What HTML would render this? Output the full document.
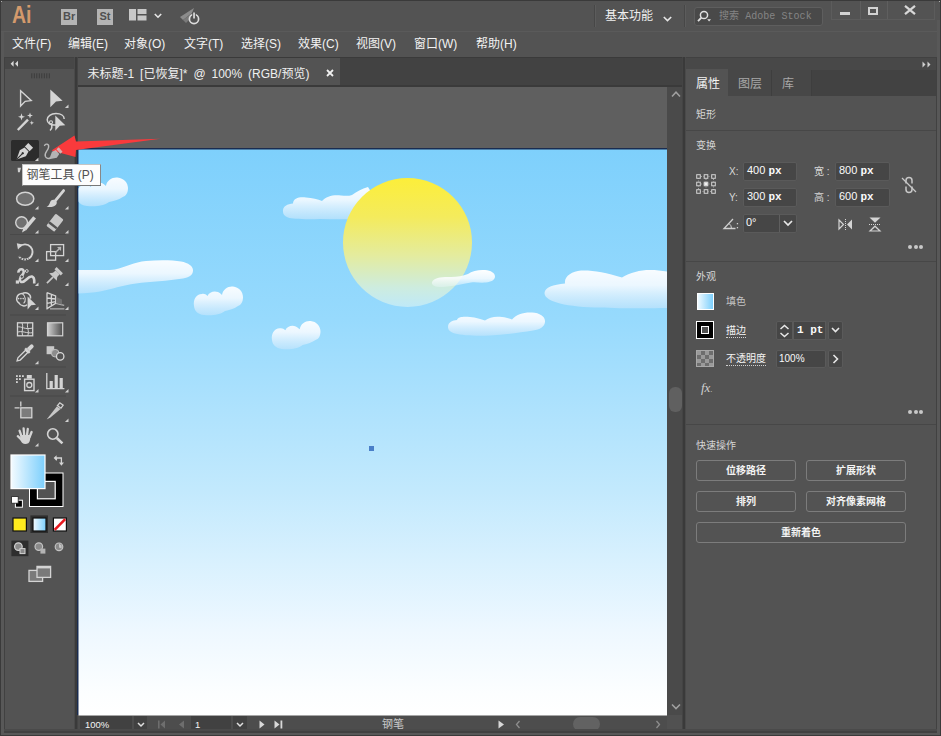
<!DOCTYPE html>
<html lang="zh-CN">
<head>
<meta charset="utf-8">
<title>Adobe Illustrator</title>
<style>
*{box-sizing:border-box;margin:0;padding:0}
html,body{width:941px;height:736px;overflow:hidden;background:#535353}
body{position:relative;font-family:"Liberation Sans","Noto Sans CJK SC",sans-serif;color:#f0f0f0;font-size:12px}
.abs{position:absolute}
.t{position:absolute;white-space:nowrap;line-height:1}
svg{position:absolute;overflow:visible}
/* frame */
#frame{left:0;top:0;width:941px;height:736px;border:1px solid #3a3a3a;pointer-events:none}
/* top bar */
#topbar{left:0;top:0;width:941px;height:32px;background:#535353}
#menubar{left:0;top:32px;width:941px;height:25px;background:#535353}
.menu{font-size:12px;color:#f2f2f2;top:38px}
/* tool panel */
#toolhead{left:4px;top:57px;width:70px;height:13px;background:#474747;border-top:1px solid #414141}
#tools{left:4px;top:69px;width:70px;height:660px;background:#535353}
#divL{left:74px;top:57px;width:4px;height:672px;background:#3a3a3a;border-left:1px solid #4a4a4a;border-right:1px solid #444}
/* doc area */
#tabbar{left:78px;top:57px;width:604px;height:30px;background:#424242;border-top:1px solid #3a3a3a;border-bottom:2px solid #3a3a3a}
#tab{left:78px;top:58px;width:262px;height:27px;background:#535353}
#paste{left:78px;top:87px;width:589px;height:628px;background:#5f5f5f}
#vscroll{left:667px;top:87px;width:15px;height:628px;background:#4a4a4a}
#divR{left:682px;top:57px;width:4px;height:672px;background:#3a3a3a;border-left:1px solid #444;border-right:1px solid #4a4a4a}
#status{left:78px;top:715px;width:604px;height:17px;background:#4d4d4d}
/* right panel */
#rhead{left:686px;top:57px;width:250px;height:13px;background:#484848;border-top:1px solid #414141}
#rtabs{left:686px;top:70px;width:250px;height:26px;background:#424242}
#rpanel{left:686px;top:96px;width:250px;height:636px;background:#535353}

.lb{font-size:10px;color:#d6d6d6}
.lbw{font-size:10px;color:#f4f4f4}
.in{position:absolute;background:#464646;border:1px solid #5a5a5a;border-radius:2px}
.iv{font-size:11px;color:#fafafa;font-family:"Liberation Sans","Noto Sans CJK SC",sans-serif}
.iv i{font-style:normal;font-family:"Liberation Mono","Noto Sans Mono CJK SC",monospace;font-size:11px;font-weight:bold}
.btn{position:absolute;height:21px;border:1px solid #7c7c7c;border-radius:3px;font-size:10px;font-weight:bold;color:#f4f4f4;text-align:center;line-height:19px;white-space:nowrap}
.sep{position:absolute;left:686px;width:250px;height:1px;background:#474747}
.dots{position:absolute;width:15px;height:5px}
.dots b{position:absolute;top:0;width:4px;height:4px;border-radius:50%;background:#c8c8c8}
</style>
</head>
<body>
<div id="topbar" class="abs"></div>
<div id="menubar" class="abs"></div>
<div id="toolhead" class="abs"></div>
<div id="tools" class="abs"></div>
<div id="divL" class="abs"></div>
<div id="tabbar" class="abs"></div>
<div id="tab" class="abs"></div>
<div id="paste" class="abs"></div>
<div id="vscroll" class="abs"></div>
<div id="divR" class="abs"></div>
<div id="status" class="abs"></div>
<div id="rhead" class="abs"></div>
<div id="rtabs" class="abs"></div>
<div id="rpanel" class="abs"></div>


<!-- TOP BAR -->
<span class="t" style="left:11.500px;top:4px;font-size:23px;font-weight:bold;color:#d39a6c;transform:scaleX(0.850);transform-origin:0 0">Ai</span>
<div class="abs" style="left:61px;top:9px;width:16px;height:16px;background:#b4b4b4"></div>
<span class="t" style="left:63px;top:11px;font-size:11px;font-weight:bold;color:#505050">Br</span>
<div class="abs" style="left:97px;top:9px;width:16px;height:16px;background:#b4b4b4"></div>
<span class="t" style="left:99.5px;top:11px;font-size:11px;font-weight:bold;color:#505050">St</span>
<svg style="left:129px;top:9px" width="18" height="12" viewBox="0 0 18 12"><rect x="0" y="0" width="7" height="11.5" fill="#c8c8c8"/><rect x="8.5" y="0" width="9" height="5" fill="#c8c8c8"/><rect x="8.5" y="6.5" width="9" height="5" fill="#c8c8c8"/></svg>
<svg style="left:154px;top:13px" width="8" height="6" viewBox="0 0 8 6"><path d="M0.8 1 L4 4.2 L7.2 1" fill="none" stroke="#e6e6e6" stroke-width="1.6"/></svg>
<svg style="left:179px;top:7px" width="22" height="19" viewBox="0 0 22 19"><path d="M1 10 L15 1 L13 6 L4 13 Z" fill="#8c8c8c"/><path d="M4 13 L13 6 L11 12 L7 16Z" fill="#7a7a7a"/><circle cx="15" cy="12" r="4.6" fill="none" stroke="#dcdcdc" stroke-width="1.7"/><rect x="13.2" y="5" width="3.6" height="6" fill="#535353"/><rect x="14.2" y="5.5" width="1.7" height="6" fill="#dcdcdc"/></svg>
<div class="abs" style="left:594px;top:5px;width:1px;height:22px;background:#474747"></div>
<div class="abs" style="left:595px;top:5px;width:1px;height:22px;background:#5c5c5c"></div>
<span class="t" style="left:605px;top:10px;font-size:12px;color:#f0f0f0">基本功能</span>
<svg style="left:663px;top:16px" width="9" height="6" viewBox="0 0 9 6"><path d="M0.8 1 L4.5 4.6 L8.2 1" fill="none" stroke="#e6e6e6" stroke-width="1.6"/></svg>
<div class="abs" style="left:684px;top:5px;width:1px;height:22px;background:#474747"></div>
<div class="abs" style="left:685px;top:5px;width:1px;height:22px;background:#5c5c5c"></div>
<div class="abs" style="left:694px;top:7px;width:129px;height:19px;background:#494949;border:1px solid #5e5e5e;border-radius:3px"></div>
<svg style="left:697px;top:10px" width="15" height="13" viewBox="0 0 15 13"><circle cx="7" cy="5" r="3.6" fill="none" stroke="#e0e0e0" stroke-width="1.5"/><path d="M4.4 7.6 L1 11.2" stroke="#e0e0e0" stroke-width="1.8" fill="none"/><path d="M10.2 9.2 L14 9.2 L12.1 11.4Z" fill="#e0e0e0"/></svg>
<span class="t" style="left:719px;top:11.500px;font-size:10px;color:#858585;font-family:'Liberation Mono','Noto Sans Mono CJK SC','Noto Sans CJK SC',monospace;letter-spacing:0.05px">搜索 Adobe Stock</span>
<div class="abs" style="left:831px;top:-1px;width:104px;height:21px;border:1px solid #5c5c5c"></div>
<div class="abs" style="left:860px;top:0;width:1px;height:19px;background:#5f5f5f"></div>
<div class="abs" style="left:887px;top:0;width:1px;height:19px;background:#5f5f5f"></div>
<div class="abs" style="left:840px;top:12px;width:10px;height:3px;background:#d2d2d2"></div>
<div class="abs" style="left:868px;top:7px;width:10px;height:8px;border:2px solid #d2d2d2;border-top-width:2.5px"></div>
<svg style="left:904px;top:5px" width="12" height="10" viewBox="0 0 12 10"><path d="M1 0.8 L11 9.2 M11 0.8 L1 9.2" stroke="#d8d8d8" stroke-width="2.2" fill="none"/></svg>
<div class="abs" style="left:0;top:31px;width:937px;height:1px;background:#5a5a5a"></div>

<!-- MENU -->
<span class="t menu" style="left:12px">文件(F)</span>
<span class="t menu" style="left:68px">编辑(E)</span>
<span class="t menu" style="left:124px">对象(O)</span>
<span class="t menu" style="left:184px">文字(T)</span>
<span class="t menu" style="left:241px">选择(S)</span>
<span class="t menu" style="left:298px">效果(C)</span>
<span class="t menu" style="left:356px">视图(V)</span>
<span class="t menu" style="left:414px">窗口(W)</span>
<span class="t menu" style="left:476px">帮助(H)</span>


<!-- TOOLS -->
<svg id="toolsvg" style="left:0;top:0" width="941" height="736" viewBox="0 0 941 736" fill="none" stroke-linejoin="miter">
<!-- collapse arrows -->
<path d="M13.600 60.800 L10.600 63.800 L13.600 66.800Z M18 60.800 L15 63.800 L18 66.800Z" fill="#d8d8d8"/>
<!-- grip -->
<g fill="#3c3c3c" transform="translate(1.300 0.300)"><rect x="30" y="73" width="1" height="5"/><rect x="32.5" y="73" width="1" height="5"/><rect x="35" y="73" width="1" height="5"/><rect x="37.5" y="73" width="1" height="5"/><rect x="40" y="73" width="1" height="5"/><rect x="42.5" y="73" width="1" height="5"/><rect x="45" y="73" width="1" height="5"/><rect x="47.5" y="73" width="1" height="5"/></g>
<rect x="10" y="234" width="56" height="1" fill="#494949"/><rect x="10" y="314.5" width="56" height="1" fill="#494949"/><rect x="10" y="366.5" width="56" height="1" fill="#494949"/><rect x="10" y="395.5" width="56" height="1" fill="#494949"/>
<!-- selected pen bg -->
<rect x="11" y="140" width="28" height="21" rx="1.5" fill="#2c2c2c"/>
<path d="M68.5 104.4 L68.5 108 L64.9 108Z" fill="#d0d0d0"/><path d="M38.5 157.4 L38.5 161 L34.9 161Z" fill="#d0d0d0"/><path d="M38.5 205.9 L38.5 209.5 L34.9 209.5Z" fill="#d0d0d0"/><path d="M68.5 205.9 L68.5 209.5 L64.9 209.5Z" fill="#d0d0d0"/><path d="M38.5 229.9 L38.5 233.5 L34.9 233.5Z" fill="#d0d0d0"/><path d="M68.5 229.9 L68.5 233.5 L64.9 233.5Z" fill="#d0d0d0"/><path d="M38.5 258.4 L38.5 262 L34.9 262Z" fill="#d0d0d0"/><path d="M68.5 258.4 L68.5 262 L64.9 262Z" fill="#d0d0d0"/><path d="M38.5 282.4 L38.5 286 L34.9 286Z" fill="#d0d0d0"/><path d="M68.5 282.4 L68.5 286 L64.9 286Z" fill="#d0d0d0"/><path d="M38.5 306.4 L38.5 310 L34.9 310Z" fill="#d0d0d0"/><path d="M68.5 306.4 L68.5 310 L64.9 310Z" fill="#d0d0d0"/><path d="M38.5 360.7 L38.5 364.3 L34.9 364.3Z" fill="#d0d0d0"/><path d="M38.5 388.9 L38.5 392.5 L34.9 392.5Z" fill="#d0d0d0"/><path d="M68.5 388.9 L68.5 392.5 L64.9 392.5Z" fill="#d0d0d0"/><path d="M68.5 418.4 L68.5 422 L64.9 422Z" fill="#d0d0d0"/><path d="M38.5 442.9 L38.5 446.5 L34.9 446.5Z" fill="#d0d0d0"/>
<!-- row1 -->
<path d="M20.6 90.8 L31.2 100.6 L25.2 101.3 L20.6 106 Z" stroke="#d4d4d4" stroke-width="1.4"/>
<path d="M50.3 89.5 L62.6 100.7 L56 101.6 L50.3 107.3 Z" fill="#d4d4d4"/>
<!-- row2 wand -->
<path d="M17.8 130 L28 119.6" stroke="#d4d4d4" stroke-width="2.4"/>
<path d="M21.5 113.2 L22.4 116 L25 116.8 L22.4 117.8 L21.5 120.5 L20.6 117.8 L18 116.8 L20.6 116Z M30 112.5 L30.8 114.8 L33 115.5 L30.8 116.3 L30 118.6 L29.2 116.3 L27 115.5 L29.2 114.8Z M31.8 120.6 L32.4 122.2 L34 122.8 L32.4 123.4 L31.8 125 L31.2 123.4 L29.6 122.8 L31.2 122.2Z" fill="#d4d4d4"/>
<!-- row2 lasso -->
<path d="M56 125 C50.5 125.5 47.2 123 47.2 119.8 C47.2 116 51 113.6 56 113.6 C61 113.6 64.2 115.8 64.2 119 M50.6 124 C52.5 125.5 52.3 128.5 50 130.5" stroke="#d4d4d4" stroke-width="1.5"/>
<circle cx="51" cy="122.2" r="1.5" stroke="#d4d4d4" stroke-width="1.1"/>
<path d="M55.3 115.5 L65.3 125.3 L59.8 125.8 L55.3 130.8Z" fill="#d4d4d4"/>
<!-- row3 pen -->
<g transform="translate(23.800 152.200) rotate(45) scale(0.930)" fill="#d4d4d4">
<path d="M-3.6 -10.5 L3.6 -10.5 L3.6 -5.2 L-3.6 -5.2Z"/>
<path d="M-3 -4.2 L3 -4.2 L4.6 1.5 L0 11 L-4.6 1.5Z"/>
<path d="M0 11 L0 2.5" stroke="#2c2c2c" stroke-width="1.1"/>
<circle cx="0" cy="1.6" r="1.3" fill="#2c2c2c"/>
</g>
<!-- row4 peek (type tool) -->
<path d="M17.6 167.8 L21 167.8 L19.8 172.2 L18 172.2Z" fill="#cfcfcf"/>
<!-- row5 ellipse -->
<ellipse cx="25.2" cy="198.8" rx="8.6" ry="6.5" fill="#707070" stroke="#d4d4d4" stroke-width="1.5"/>
<!-- brush -->
<path d="M63.6 190.6 L55.6 200.4" stroke="#d4d4d4" stroke-width="2.8" stroke-linecap="round"/>
<path d="M54.2 199.8 C57.8 201 57.6 204.6 54 206.2 C51.5 207.3 48.6 207.2 46.6 206.9 C49 205.6 49.4 203.8 50.2 201.9 C51 200 52.6 199.3 54.2 199.8Z" fill="#d4d4d4"/>
<!-- row6 shaper -->
<circle cx="21.6" cy="222.6" r="5.9" fill="#707070" stroke="#d4d4d4" stroke-width="1.4"/>
<path d="M34.6 217.4 L24.8 229" stroke="#d4d4d4" stroke-width="3.6"/>
<path d="M23.4 227.6 L26.3 230.1 L22 232.4Z" fill="#d4d4d4"/>
<!-- eraser -->
<g transform="rotate(38 55 222.6)"><rect x="50" y="215" width="10" height="15.4" rx="1.2" fill="#c8c8c8"/><rect x="50" y="224.8" width="10" height="2.4" fill="#535353"/></g>
<!-- row7 rotate -->
<path d="M19.5 246.6 A7.6 7.6 0 1 1 18.6 256.2" stroke="#d4d4d4" stroke-width="1.9"/>
<path d="M16.8 243.2 L22.6 244.6 L18 249.6Z" fill="#d4d4d4"/>
<path d="M18.6 256.2 A7.6 7.6 0 0 0 29 258.6" stroke="#535353" stroke-width="2" stroke-dasharray="1.2 1.6"/>
<!-- scale -->
<rect x="50.6" y="244.6" width="13" height="11" stroke="#d4d4d4" stroke-width="1.3"/>
<rect x="46.6" y="251.6" width="9" height="8.6" stroke="#d4d4d4" stroke-width="1.3"/>
<path d="M55 253 L60 248" stroke="#b8b8b8" stroke-width="1.4"/><path d="M57 247 L61.2 246.8 L61 251Z" fill="#b8b8b8"/>
<!-- row8 width -->
<path d="M18.4 272.6 C18.2 268.2 24.6 268 23.6 272.6 C22.8 276 17.8 278.6 20.6 281.4 C24.4 284.6 27.6 275.4 32 276.6 C35 277.6 34.2 281.4 34.2 283.6" stroke="#d4d4d4" stroke-width="2.6"/>
<rect x="15.8" y="280.4" width="3.2" height="3.2" fill="#d4d4d4"/>
<circle cx="21.8" cy="276.6" r="1.7" fill="#535353" stroke="#d4d4d4" stroke-width="1"/><circle cx="26.8" cy="271" r="1.4" fill="#535353" stroke="#d4d4d4" stroke-width="1"/>
<!-- pin -->
<g transform="translate(-1.6 1.6) rotate(45 55 275)" fill="#c8c8c8"><rect x="50.6" y="266" width="8.8" height="3"/><path d="M52.2 269 L57.8 269 L58 272.6 L60.4 275.6 L49.6 275.6 L52 272.6Z"/><rect x="54.2" y="275.6" width="1.7" height="8.6"/></g>
<!-- row9 shape builder -->
<path d="M22 293.6 C26.6 291.2 31.4 294.4 30.4 298.6 M22 293.6 C16.4 294 15 300.4 19 303 C20.6 306.4 25.4 306.6 27 304.6" stroke="#d4d4d4" stroke-width="1.5"/>
<path d="M22.4 293.8 C25.8 296 26.2 301.2 23.6 303.4" stroke="#d4d4d4" stroke-width="1.1"/>
<circle cx="18.6" cy="298.6" r="0.8" fill="#d4d4d4"/><circle cx="20.9" cy="298.6" r="0.8" fill="#d4d4d4"/><circle cx="23.2" cy="298.6" r="0.8" fill="#d4d4d4"/>
<path d="M27.6 296.4 L36 304.8 L31.2 305.2 L27.6 309.4Z" fill="#d4d4d4"/>
<!-- perspective grid -->
<path d="M47 292.4 L47 309.4 M47 292.6 L55.6 296 L55.6 303.4 L47 308.6 M51.4 294.4 L51.4 306 M47 298 L55.6 299 M47 303.4 L55.6 301.6" stroke="#d4d4d4" stroke-width="1.3"/>
<path d="M56 303.4 L64.2 305.4 M50 308.8 L64.4 308.8" stroke="#b0b0b0" stroke-width="1.2"/>
<path d="M56.4 297 L62 299.4 L62 304.4 L56.4 303Z" fill="#707070"/>
<!-- row10 mesh -->
<rect x="17.5" y="322.8" width="15.2" height="13" stroke="#d4d4d4" stroke-width="1.3"/>
<path d="M17 327 C22 326 24 330 33 328 M17 332.4 C22 330 27 334 33 332.6 M22 322.6 C24 327 21 331 22.6 336 M28 322.6 C26 327 30 331 27.6 336" stroke="#d4d4d4" stroke-width="1"/>
<!-- gradient -->
<rect x="47.5" y="322.8" width="15.2" height="13" fill="url(#tg)" stroke="#d4d4d4" stroke-width="1.2"/>
<defs><linearGradient id="tg" x1="0" y1="0" x2="1" y2="0"><stop offset="0" stop-color="#d0d0d0"/><stop offset="1" stop-color="#4c4c4c"/></linearGradient>
<linearGradient id="fg" x1="0" y1="0" x2="1" y2="0"><stop offset="0" stop-color="#f4fbff"/><stop offset="1" stop-color="#7ccffc"/></linearGradient></defs>
<!-- row11 eyedropper -->
<g transform="rotate(45 25 353)"><path d="M23.4 350.6 L26.6 350.6 L26.6 361.4 L25 364.2 L23.4 361.4Z" stroke="#d4d4d4" stroke-width="1.3"/><rect x="21.8" y="348.4" width="6.4" height="2.4" fill="#d4d4d4"/><path d="M23 348.4 L23 343.6 A2 2 0 0 1 27 343.6 L27 348.4Z" fill="#d4d4d4"/></g>
<!-- blend -->
<rect x="46.6" y="346.2" width="7.6" height="8" fill="#c8c8c8"/>
<circle cx="55.2" cy="353.2" r="3.8" fill="#8c8c8c" stroke="#c0c0c0" stroke-width="1"/>
<circle cx="60.2" cy="356.4" r="3.7" fill="#535353" stroke="#d8d8d8" stroke-width="1.3"/>
<!-- row12 sprayer -->
<rect x="24.6" y="379.2" width="9.4" height="11.4" stroke="#d4d4d4" stroke-width="1.4"/>
<rect x="26.8" y="375" width="5" height="3.6" fill="#d4d4d4"/>
<circle cx="29.3" cy="385" r="2.5" stroke="#d4d4d4" stroke-width="1.3"/>
<g fill="#d4d4d4"><rect x="16" y="375.2" width="1.8" height="1.8"/><rect x="19" y="375.2" width="1.8" height="1.8"/><rect x="22" y="375.2" width="1.8" height="1.8"/><rect x="16" y="378.2" width="1.8" height="1.8"/><rect x="19" y="378.2" width="1.8" height="1.8"/><rect x="16" y="381.2" width="1.8" height="1.8"/></g>
<!-- graph -->
<path d="M46.8 373 L46.8 388.6 L64.4 388.6" stroke="#d4d4d4" stroke-width="1.3"/>
<g fill="#d4d4d4"><rect x="49.6" y="381" width="3.2" height="7"/><rect x="54.6" y="375" width="3.2" height="13"/><rect x="59.6" y="378" width="3.2" height="10"/></g>
<!-- row13 artboard -->
<rect x="20.8" y="407.8" width="11" height="10" fill="#7c7c7c" stroke="#d4d4d4" stroke-width="1.3"/>
<path d="M20.8 401.6 L20.8 406.6 M14.6 407.8 L19.6 407.8" stroke="#d4d4d4" stroke-width="1.3"/>
<!-- slice -->
<path d="M46.6 419.4 L56.8 406.4 L60.6 409 L50.4 417.6Z" fill="#c8c8c8"/>
<path d="M57.4 405.6 L59.8 402.8 L63.2 405.2 L61 408.2Z" stroke="#d4d4d4" stroke-width="1.2"/>
<!-- row14 hand -->
<g stroke="#d4d4d4" stroke-width="2.3" stroke-linecap="round"><path d="M21.6 436.4 L19.6 430.8"/><path d="M24.2 435.2 L23.6 428.4"/><path d="M27 435.4 L27.8 428.8"/><path d="M29.6 437 L31.6 432"/><path d="M21.2 439.4 L17.8 436.2"/></g>
<path d="M20.4 435 L30.6 435 L30 440 C29.4 443 27.6 444 25.4 444 C22.8 444 21.4 442.6 20.4 440Z" fill="#d4d4d4"/>
<!-- zoom -->
<circle cx="52.8" cy="434" r="5.2" stroke="#d4d4d4" stroke-width="1.6"/>
<path d="M56.8 438 L62.4 443.4" stroke="#d4d4d4" stroke-width="2.6"/>
<!-- fill / stroke -->
<rect x="29.5" y="473" width="33.5" height="33.5" fill="#000" stroke="#fff" stroke-width="1"/>
<rect x="37.4" y="481.4" width="17.8" height="17.4" fill="#535353" stroke="#fff" stroke-width="1.2"/>
<rect x="11" y="455" width="34" height="33.6" fill="url(#fg)" stroke="#fff" stroke-width="1.2"/>
<!-- swap -->
<path d="M56.4 460.2 L56.4 458 L61.4 458 L61.4 463.4" stroke="#d4d4d4" stroke-width="1.3"/>
<path d="M56.6 455.2 L56.6 460.8 L53.6 458Z M59 462.6 L64 462.6 L61.4 465.8Z" fill="#d4d4d4"/>
<!-- default -->
<rect x="15.4" y="500.2" width="7" height="7" fill="#000" stroke="#fff" stroke-width="1"/>
<rect x="11.6" y="496.6" width="6.6" height="6.6" fill="#fff" stroke="#222" stroke-width="0.8"/>
<!-- small swatches -->
<rect x="30.4" y="515.4" width="17.6" height="17.6" fill="#2e2e2e"/>
<rect x="13" y="518" width="13.4" height="13" fill="#ffec1e" stroke="#111" stroke-width="1.2"/>
<rect x="33" y="518" width="13" height="13" fill="url(#fg)" stroke="#111" stroke-width="1.2"/>
<rect x="53.4" y="518" width="13" height="13" fill="#fff" stroke="#111" stroke-width="1.2"/>
<path d="M54.6 529.8 L65.2 519.2" stroke="#e8181e" stroke-width="2.6"/>
<!-- draw modes -->
<rect x="11.4" y="540.6" width="17" height="15.6" fill="#2e2e2e"/>
<circle cx="18.4" cy="546.6" r="3.8" fill="#8a8a8a" stroke="#d4d4d4" stroke-width="1.2"/><rect x="20" y="548.6" width="5" height="5" fill="#8a8a8a" stroke="#d4d4d4" stroke-width="1"/>
<circle cx="38.8" cy="546.6" r="3.8" fill="#8a8a8a" stroke="#c4c4c4" stroke-width="1.2"/><rect x="40.4" y="548.6" width="5" height="5" fill="#b4b4b4"/>
<circle cx="59" cy="546.8" r="3.8" fill="#8a8a8a" stroke="#c4c4c4" stroke-width="1.2"/><path d="M59 543.6 L61.6 545.6 L61.6 548.6 L59 547.4Z" fill="#c4c4c4"/>
<!-- screen mode -->
<rect x="29" y="570.4" width="13.6" height="11" fill="#7a7a7a" stroke="#d4d4d4" stroke-width="1.3"/>
<rect x="37" y="566.4" width="13.6" height="11" fill="#7a7a7a" stroke="#d4d4d4" stroke-width="1.3"/>
<rect x="37" y="566.4" width="13.6" height="2" fill="#d4d4d4"/>
</svg>


<!-- ARTBOARD -->
<div id="art" class="abs" style="left:77px;top:148px;width:590px;height:567px;overflow:hidden;background:#1a2c50"></div>
<svg id="artsvg" style="left:0;top:0" width="941" height="736" viewBox="0 0 941 736">
<defs>
<linearGradient id="sky" x1="0" y1="0" x2="0" y2="1"><stop offset="0" stop-color="#7ed0fc"/><stop offset="0.3" stop-color="#97dafd"/><stop offset="0.6" stop-color="#c2e9fd"/><stop offset="0.85" stop-color="#eef8ff"/><stop offset="0.960" stop-color="#fcfeff"/><stop offset="1" stop-color="#ffffff"/></linearGradient>
<linearGradient id="sun" x1="0" y1="0" x2="0" y2="1"><stop offset="0" stop-color="#fcee3a"/><stop offset="0.3" stop-color="#f4eb5c"/><stop offset="0.6" stop-color="#e4ec9e"/><stop offset="0.85" stop-color="#cdecdf"/><stop offset="1" stop-color="#bfe9f8"/></linearGradient>
<linearGradient id="cl" x1="0" y1="0" x2="0" y2="1"><stop offset="0" stop-color="#f8fcff" stop-opacity="1"/><stop offset="0.400" stop-color="#eef8ff" stop-opacity="0.970"/><stop offset="1" stop-color="#bfe4fc" stop-opacity="0.750"/></linearGradient>
<linearGradient id="cl2" x1="0" y1="0" x2="0" y2="1"><stop offset="0" stop-color="#fff" stop-opacity="1"/><stop offset="0.500" stop-color="#fbfdff" stop-opacity="0.850"/><stop offset="1" stop-color="#eef8ff" stop-opacity="0.350"/></linearGradient>
<clipPath id="ac"><rect x="78.500" y="149.500" width="588.500" height="566"/></clipPath>
<path id="cA" d="M1 20 C0 14 3 8 9 8 C11 7.5 13 8.5 14.5 10 C16 6 21 4.5 25 6 C27 7 28 8 29 9 C30 3 35 0 40 0.5 C46 1 50 6 50 11 C50 16 48 19 45 20 C41 23 36 24 32 25 C27 29 18 30 11 29 C5 28.5 1.5 25 1 20Z"/>
</defs>
<g clip-path="url(#ac)">
<rect x="78" y="149" width="590" height="567" fill="url(#sky)"/>
<!-- cloud 5 (behind sun) -->
<path d="M283 212 C282 206 288 204 293 203.5 C293 198 300 196.5 306 197.5 C312 198 318 199 322 201 C326 196 334 194.5 341 195.5 C346 196 349 196 352 195 C356 192 362 188.5 368 187 L376 200 L372 218 C360 219.5 340 219.5 320 219 C305 219.5 292 219 288 217.5 C285 216.5 283 214.5 283 212Z" fill="url(#cl)"/>
<!-- sun -->
<circle cx="407.5" cy="242.5" r="64.5" fill="url(#sun)"/>
<!-- cloud 1 -->
<use href="#cA" transform="translate(75.5 177) scale(1.05 1)" fill="url(#cl)"/>
<!-- cloud 2 -->
<path d="M70 270.5 C90 269 105 271 115 269.5 C126 267 134 262 146 261 C158 260 172 260 181 261.5 C189 263 193.5 266.5 193 271 C192.5 275.5 189 277.5 183 278.5 C168 281 150 281.5 136 283.5 C122 285.5 112 289 100 291.5 C92 293 82 293.5 70 293.5Z" fill="url(#cl)"/>
<!-- cloud 3, 4 -->
<use href="#cA" transform="translate(193 286)" fill="url(#cl)"/>
<use href="#cA" transform="translate(271 320.5) scale(0.99 0.98)" fill="url(#cl)"/>
<!-- cloud 6 -->
<path d="M432 282 C434 278 440 277 448 277 C456 277.5 462 276 468 274 C472 271 479 269.5 485 270 C491 270.5 495 273 495 276.5 C495 280 491 282 486 282.5 C480 283 476 282 471 282.5 C462 284 452 286.5 443 287 C437 287.5 431 286 432 282Z" fill="url(#cl2)"/>
<!-- cloud 7 -->
<path d="M448 327 C448 322 453 320.5 457 320 C458 316.5 464 316.5 470 317 C476 317.5 481 319 485 320.5 C489 317 496 316 502 317 C506 317.5 509 318.5 512 319.5 C516 314.500 524 312 532 312.500 C540 313 545.500 316.500 545 322 C544.500 327 540 329.500 533 330.500 C520 332.500 505 335 490 335.500 C476 336 462 335.500 455 333.500 C450 332 448 330 448 327Z" fill="url(#cl)"/>
<!-- cloud 8 -->
<path d="M544.500 293 C545 287.500 553 284.500 565 283.500 C564 276 572 271.500 581 270.500 C592 270 606 272.500 622 277.500 C630 272.500 640 270 650 270 C658 270 664 271 672 272.500 L672 308 C650 308.500 620 308.500 600 307.500 C585 307.500 570 306 560 303.500 C551 301 544.500 298 544.500 293Z" fill="url(#cl)"/>
<!-- center point -->
<rect x="369" y="446" width="5" height="5" fill="#4a7fc8"/>
</g>
</svg>

<!-- RED ARROW -->
<svg style="left:0;top:0" width="941" height="736" viewBox="0 0 941 736">
<path d="M51.5 150.500 L74.500 135.500 L76 141.500 L160.500 138.800 L76 150 L75.500 157Z" fill="#f93a3c"/>
<!-- curvature tool over arrow -->
<g opacity="0.780" transform="translate(-3.200 1.500)"><path d="M47.600 144.400 C48.600 141.600 52.400 142.200 51.800 145.600 C51.200 149.400 47 151.600 48.600 155 C49.600 157 52 157.400 53.600 156.400" stroke="#d8d8d8" stroke-width="1.400" fill="none"/>
<g transform="translate(58.500 152.500) rotate(50)" fill="#d0d0d0"><path d="M-2.600 -3 L2.600 -3 L3.800 1.200 L0 8 L-3.800 1.200Z"/><rect x="-3" y="-7" width="6" height="3"/></g></g>
</svg>

<!-- TOOLTIP -->
<div class="abs" style="left:22px;top:164px;width:79px;height:22px;background:#fdfdfd;border:1px solid #c4c4c4;border-bottom-color:#777;border-right-color:#888"></div>
<span class="t" style="left:26.500px;top:169px;font-size:12px;color:#505050">钢笔工具 (P)</span>

<!-- DOC TAB -->
<span class="t" style="left:87.500px;top:67.500px;font-size:12px;color:#f0f0f0;word-spacing:2.600px">未标题-1 [已恢复]* @ 100% (RGB/预览)</span>
<svg style="left:326px;top:68.500px" width="8" height="8" viewBox="0 0 8 8"><path d="M1 1 L7 7 M7 1 L1 7" stroke="#f0f0f0" stroke-width="1.800"/></svg>


<!-- RIGHT PANEL -->
<svg style="left:922px;top:60.500px" width="10" height="7" viewBox="0 0 10 7"><path d="M0.500 0.500 L3.500 3.500 L0.500 6.500Z M5.500 0.500 L8.500 3.500 L5.500 6.500Z" fill="#d0d0d0"/></svg>
<div class="abs" style="left:686px;top:69px;width:42px;height:28px;background:#535353"></div>
<div class="abs" style="left:728px;top:70px;width:83px;height:26px;background:#474747"></div>
<div class="abs" style="left:771px;top:70px;width:1px;height:26px;background:#3e3e3e"></div>
<div class="abs" style="left:811px;top:70px;width:1px;height:26px;background:#3e3e3e"></div>
<span class="t" style="left:696px;top:78px;font-size:12px;color:#f4f4f4">属性</span>
<span class="t" style="left:738px;top:78px;font-size:12px;color:#a8a8a8">图层</span>
<span class="t" style="left:782px;top:78px;font-size:12px;color:#a8a8a8">库</span>

<span class="t lb" style="left:696px;top:110px">矩形</span>
<div class="sep" style="top:130px"></div>
<span class="t lb" style="left:696px;top:141px">变换</span>
<svg style="left:696px;top:174px" width="20" height="20" viewBox="0 0 20 20" fill="none" stroke="#d4d4d4" stroke-width="1"><path d="M2.500 2.500 H17.500 V17.500 H2.500Z M10 2.500 V17.500 M2.500 10 H17.500" stroke-dasharray="1 1.500" stroke="#a0a0a0"/><rect x="0.700" y="0.700" width="3.600" height="3.600" fill="#535353"/><rect x="8.200" y="0.700" width="3.600" height="3.600" fill="#535353"/><rect x="15.700" y="0.700" width="3.600" height="3.600" fill="#535353"/><rect x="0.700" y="8.200" width="3.600" height="3.600" fill="#535353"/><rect x="8.200" y="8.200" width="3.600" height="3.600" fill="#f0f0f0"/><rect x="15.700" y="8.200" width="3.600" height="3.600" fill="#535353"/><rect x="0.700" y="15.700" width="3.600" height="3.600" fill="#535353"/><rect x="8.200" y="15.700" width="3.600" height="3.600" fill="#535353"/><rect x="15.700" y="15.700" width="3.600" height="3.600" fill="#535353"/></svg>
<span class="t lb" style="left:729px;top:167px">X:</span>
<div class="in" style="left:743px;top:162px;width:54px;height:19px"></div>
<span class="t iv" style="left:747px;top:165px">400 <i>px</i></span>
<span class="t lb" style="left:729px;top:193px">Y:</span>
<div class="in" style="left:743px;top:188px;width:54px;height:19px"></div>
<span class="t iv" style="left:747px;top:191px">300 <i>px</i></span>
<span class="t lb" style="left:814px;top:167px">宽 :</span>
<div class="in" style="left:835px;top:162px;width:55px;height:19px"></div>
<span class="t iv" style="left:839px;top:165px">800 <i>px</i></span>
<span class="t lb" style="left:814px;top:193px">高 :</span>
<div class="in" style="left:835px;top:188px;width:55px;height:19px"></div>
<span class="t iv" style="left:839px;top:191px">600 <i>px</i></span>
<svg style="left:900px;top:176px" width="18" height="18" viewBox="0 0 18 18" fill="none" stroke="#c8c8c8" stroke-width="1.500"><path d="M6 7.500 V4.500 A3 3 0 0 1 12 4.500 V7.500 M6 10.500 V13.500 A3 3 0 0 0 12 13.500 V10.500"/><path d="M2 2 L16 16" stroke-width="1.300"/></svg>
<svg style="left:723px;top:218px" width="16" height="12" viewBox="0 0 16 12" fill="none" stroke="#d0d0d0" stroke-width="1.300"><path d="M10 1 L1 10.500 L12.500 10.500"/><path d="M6 5.500 A6 6 0 0 1 8.500 10.500" stroke-width="1"/><rect x="13.800" y="5" width="1.300" height="1.300" fill="#d0d0d0" stroke="none"/><rect x="13.800" y="9" width="1.300" height="1.300" fill="#d0d0d0" stroke="none"/></svg>
<div class="in" style="left:743px;top:214px;width:54px;height:19px"></div>
<div class="abs" style="left:779px;top:215px;width:1px;height:17px;background:#5f5f5f"></div>
<span class="t iv" style="left:746px;top:217px">0°</span>
<svg style="left:783px;top:220px" width="10" height="7" viewBox="0 0 10 7"><path d="M1 1 L5 5 L9 1" fill="none" stroke="#e8e8e8" stroke-width="1.700"/></svg>
<svg style="left:838px;top:219px" width="15" height="11" viewBox="0 0 15 11"><path d="M1 1 L5.500 5.500 L1 10Z" fill="none" stroke="#d4d4d4" stroke-width="1.200"/><path d="M14 0.500 L9 5.500 L14 10.500Z" fill="#d4d4d4"/><path d="M7.500 0 V11" stroke="#d4d4d4" stroke-width="1" stroke-dasharray="1 1"/></svg>
<svg style="left:869px;top:217px" width="12" height="15" viewBox="0 0 12 15"><path d="M0.500 0.500 L11.500 0.500 L6 5.800Z" fill="#d4d4d4"/><path d="M1 14 L11 14 L6 9.200Z" fill="none" stroke="#d4d4d4" stroke-width="1.200"/><path d="M0 7.500 H12" stroke="#d4d4d4" stroke-width="1" stroke-dasharray="1 1"/></svg>
<div class="dots" style="left:908px;top:245px"><b style="left:0"></b><b style="left:5.500px"></b><b style="left:11px"></b></div>
<div class="sep" style="top:261px"></div>

<span class="t lb" style="left:696px;top:272px">外观</span>
<div class="abs" style="left:696.500px;top:292.500px;width:17px;height:17px;border:1px solid #fff;background:linear-gradient(90deg,#eef9ff,#7ccffc)"></div>
<span class="t lb" style="left:726px;top:297px;color:#c4c4c4">填色</span>
<div class="abs" style="left:696px;top:321px;width:18px;height:18px;border:1px solid #fff;background:#000"></div>
<div class="abs" style="left:701px;top:326px;width:8px;height:8px;border:1px solid #fff;background:#535353"></div>
<span class="t lbw" style="left:726px;top:326px;border-bottom:1px dotted #d0d0d0;padding-bottom:1px">描边</span>
<div class="in" style="left:776px;top:321px;width:17px;height:19px;border-radius:2px 0 0 2px"></div>
<svg style="left:779px;top:324px" width="11" height="14" viewBox="0 0 11 14" fill="none" stroke="#e8e8e8" stroke-width="1.500"><path d="M1.500 5 L5.500 1.500 L9.500 5 M1.500 9 L5.500 12.500 L9.500 9"/></svg>
<div class="in" style="left:793px;top:321px;width:33px;height:19px;border-radius:0"></div>
<span class="t iv" style="left:797px;top:324px"><i>1 pt</i></span>
<div class="in" style="left:828px;top:321px;width:15px;height:19px"></div>
<svg style="left:831px;top:327px" width="9" height="6" viewBox="0 0 9 6"><path d="M1 1 L4.500 4.500 L8 1" fill="none" stroke="#e8e8e8" stroke-width="1.600"/></svg>
<svg style="left:696px;top:350px" width="18" height="17" viewBox="0 0 18 17"><rect x="0.500" y="0.500" width="17" height="16" fill="#6e6e6e" stroke="#a8a8a8"/><g fill="#9a9a9a"><rect x="1" y="1" width="4" height="4"/><rect x="9" y="1" width="4" height="4"/><rect x="5" y="5" width="4" height="4"/><rect x="13" y="5" width="4" height="4"/><rect x="1" y="9" width="4" height="4"/><rect x="9" y="9" width="4" height="4"/><rect x="5" y="13" width="4" height="3"/><rect x="13" y="13" width="4" height="3"/></g></svg>
<span class="t lbw" style="left:726px;top:354px;border-bottom:1px dotted #d0d0d0;padding-bottom:1px">不透明度</span>
<div class="in" style="left:776px;top:350px;width:50px;height:18px"></div>
<span class="t iv" style="left:779px;top:354px;font-size:10px">100%</span>
<div class="in" style="left:828px;top:350px;width:15px;height:18px"></div>
<svg style="left:832px;top:354px" width="7" height="10" viewBox="0 0 7 10"><path d="M1.500 1 L5.500 5 L1.500 9" fill="none" stroke="#e8e8e8" stroke-width="1.600"/></svg>
<span class="t" style="left:701px;top:381px;font-size:13px;font-style:italic;font-family:'Liberation Serif',serif;color:#d0d0d0">fx<span style="font-size:8px">.</span></span>
<div class="dots" style="left:908px;top:410px"><b style="left:0"></b><b style="left:5.500px"></b><b style="left:11px"></b></div>
<div class="sep" style="top:424px"></div>

<span class="t lb" style="left:696px;top:441px">快速操作</span>
<div class="btn" style="left:696px;top:460px;width:100px">位移路径</div>
<div class="btn" style="left:806px;top:460px;width:100px">扩展形状</div>
<div class="btn" style="left:696px;top:491px;width:100px">排列</div>
<div class="btn" style="left:806px;top:491px;width:100px">对齐像素网格</div>
<div class="btn" style="left:696px;top:522px;width:210px">重新着色</div>

<!-- SCROLLBARS / STATUS -->
<div class="abs" style="left:667px;top:715px;width:15px;height:16px;background:#515151"></div>
<svg style="left:670.500px;top:90px" width="10" height="8" viewBox="0 0 10 8"><path d="M1 6.500 L5 2.200 L9 6.500" fill="none" stroke="#a0a0a0" stroke-width="1.500"/></svg>
<svg style="left:670.800px;top:703px" width="10" height="8" viewBox="0 0 10 8"><path d="M1 1.500 L5 5.600 L9 1.500" fill="none" stroke="#a0a0a0" stroke-width="1.500"/></svg>
<div class="abs" style="left:669px;top:387px;width:13px;height:25px;border-radius:6px;background:#606060"></div>
<div class="abs" style="left:80px;top:716px;width:52px;height:15px;background:#414141"></div><div class="abs" style="left:134px;top:716px;width:13px;height:15px;background:#414141"></div>
<span class="t" style="left:85px;top:719.500px;font-size:9.500px;color:#f4f4f4">100%</span>
<svg style="left:136.500px;top:722px" width="8" height="6" viewBox="0 0 8 6"><path d="M1 1 L4 4 L7 1" fill="none" stroke="#e0e0e0" stroke-width="1.500"/></svg>
<svg style="left:158px;top:720px" width="30" height="9" viewBox="0 0 30 9"><rect x="0" y="0.500" width="1.600" height="8" fill="#6e6e6e"/><path d="M7 0.500 V8.500 L2.500 4.500Z" fill="#6e6e6e"/><path d="M26 0.500 V8.500 L21 4.500Z" fill="#6e6e6e"/></svg>
<div class="abs" style="left:191px;top:716px;width:40px;height:15px;background:#414141"></div><div class="abs" style="left:233px;top:716px;width:14px;height:15px;background:#414141"></div>
<span class="t" style="left:195px;top:719.500px;font-size:9.500px;color:#f4f4f4">1</span>
<svg style="left:236px;top:722px" width="8" height="6" viewBox="0 0 8 6"><path d="M1 1 L4 4 L7 1" fill="none" stroke="#e0e0e0" stroke-width="1.500"/></svg>
<svg style="left:259px;top:720px" width="26" height="9" viewBox="0 0 26 9"><path d="M0.500 0.500 V8.500 L5.500 4.500Z" fill="#d8d8d8"/><path d="M15.500 0.500 V8.500 L20.500 4.500Z" fill="#d8d8d8"/><rect x="21.500" y="0.500" width="1.800" height="8" fill="#d8d8d8"/></svg>
<span class="t" style="left:382px;top:719px;font-size:11px;color:#c8c8c8">钢笔</span>
<svg style="left:498px;top:720px" width="7" height="9" viewBox="0 0 7 9"><path d="M0.500 0.500 V8.500 L6 4.500Z" fill="#d8d8d8"/></svg>
<svg style="left:515px;top:720px" width="6" height="9" viewBox="0 0 6 9"><path d="M4.500 1 L1.500 4.500 L4.500 8" fill="none" stroke="#8e8e8e" stroke-width="1.300"/></svg>
<svg style="left:655px;top:720px" width="6" height="9" viewBox="0 0 6 9"><path d="M1.500 1 L4.500 4.500 L1.500 8" fill="none" stroke="#8e8e8e" stroke-width="1.300"/></svg>
<div class="abs" style="left:573px;top:717px;width:27px;height:14px;border-radius:7px;background:#626262"></div>

<div class="abs" style="left:1px;top:32px;width:3px;height:701px;background:#585858"></div>
<div class="abs" style="left:4px;top:57px;width:1px;height:675px;background:#414141"></div>
<div class="abs" style="left:937px;top:20px;width:3px;height:713px;background:#585858"></div>
<div class="abs" style="left:936px;top:57px;width:1px;height:675px;background:#414141"></div>
<div class="abs" style="left:1px;top:733px;width:939px;height:2px;background:#585858"></div>
<div class="abs" style="left:4px;top:731px;width:933px;height:2px;background:#414141"></div>
<div class="abs" style="left:4px;top:729px;width:933px;height:2px;background:#4a4a4a"></div>
<svg style="left:0;top:0" width="941" height="5" viewBox="0 0 941 5"><path d="M0 0 L3 0 L0 3Z M941 0 L938 0 L941 3Z" fill="#fff"/></svg>
<div id="frame" class="abs"></div>
</body>
</html>
